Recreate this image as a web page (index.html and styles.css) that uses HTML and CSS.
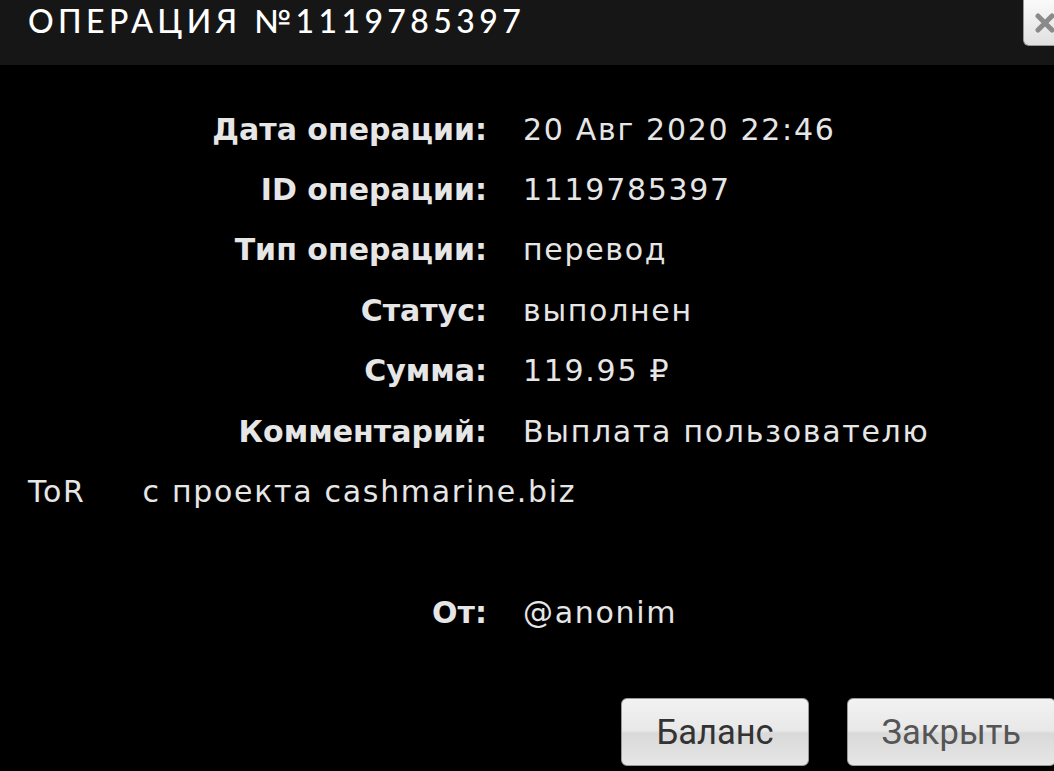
FILE: index.html
```html
<!DOCTYPE html>
<html lang="ru">
<head>
    <meta charset="UTF-8">
    <title>Операция №1119785397</title>
    <link rel="stylesheet" href="styles.css">
</head>
<body>
    <div class="titlebar">
        <h1 class="title">ОПЕРАЦИЯ №1119785397</h1>
        <button class="close-btn" aria-label="Закрыть">
            <svg width="22" height="22" viewBox="0 0 22 22">
                <path d="M4 4 L18 18 M18 4 L4 18" stroke="#8a8a8a" stroke-width="5" stroke-linecap="round"/>
            </svg>
        </button>
    </div>

    <div class="details">
        <div class="label">Дата операции:</div>
        <div class="value">20 Авг 2020 22:46</div>

        <div class="label">ID операции:</div>
        <div class="value">1119785397</div>

        <div class="label">Тип операции:</div>
        <div class="value">перевод</div>

        <div class="label">Статус:</div>
        <div class="value">выполнен</div>

        <div class="label">Сумма:</div>
        <div class="value">119.95 ₽</div>

        <div class="label">Комментарий:</div>
        <div class="value">Выплата пользователю</div>

        <div class="wrapline">
            <span>ToR</span>
            <span>с проекта cashmarine.biz</span>
        </div>

        <div class="spacer"></div>

        <div class="label">От:</div>
        <div class="value">@anonim</div>
    </div>

    <div class="actions">
        <button class="btn">Баланс</button>
        <button class="btn btn-light">Закрыть</button>
    </div>
</body>
</html>
```

FILE: styles.css
```css
body {
    margin: 0;
    background: #000;
    color: #e6e6e6;
    font-family: "DejaVu Sans", "Open Sans", sans-serif;
    width: 1054px;
    height: 771px;
    overflow: hidden;
}

.titlebar {
    height: 65px;
    background-color: #161616;
    display: flex;
    align-items: flex-start;
    justify-content: space-between;
    padding-left: 28px;
    box-sizing: border-box;
}

.title {
    margin: 0;
    font-family: Lato, sans-serif;
    font-size: 32px;
    font-weight: 500;
    line-height: 42px;
    letter-spacing: 4.4px;
    color: #fff;
}

.close-btn {
    width: 40px;
    height: 46px;
    margin-right: -9px;
    border: 1px solid #999;
    border-top: none;
    border-radius: 0 0 6px 6px;
    background: linear-gradient(#fafafa, #e0e0e0);
    padding: 0 0 0 10px;
    display: flex;
    align-items: center;
}

.details {
    display: grid;
    grid-template-columns: 487px auto;
    column-gap: 36px;
    grid-auto-rows: 60.4px;
    align-items: center;
    padding-top: 34px;
    font-size: 30px;
}

.label {
    text-align: right;
    font-weight: 700;
}

.value {
    font-weight: 400;
    letter-spacing: 1.7px;
}

.wrapline {
    grid-column: 1 / -1;
    padding-left: 28px;
    display: flex;
    gap: 57px;
    letter-spacing: 1.7px;
}

.spacer {
    grid-column: 1 / -1;
}

.actions {
    display: flex;
    justify-content: flex-end;
    gap: 38px;
    margin-top: 55px;
    margin-right: -2px;
}

.btn {
    height: 68px;
    padding: 0 34px;
    font-family: Roboto, sans-serif;
    font-size: 34.5px;
    color: #333;
    background: linear-gradient(#f2f2f2 0%, #e8e8e8 48%, #d9d9d9 52%, #e6e6e6 100%);
    border: 1px solid #9a9a9a;
    border-radius: 6px;
}

.btn-light {
    color: #555;
}
```
